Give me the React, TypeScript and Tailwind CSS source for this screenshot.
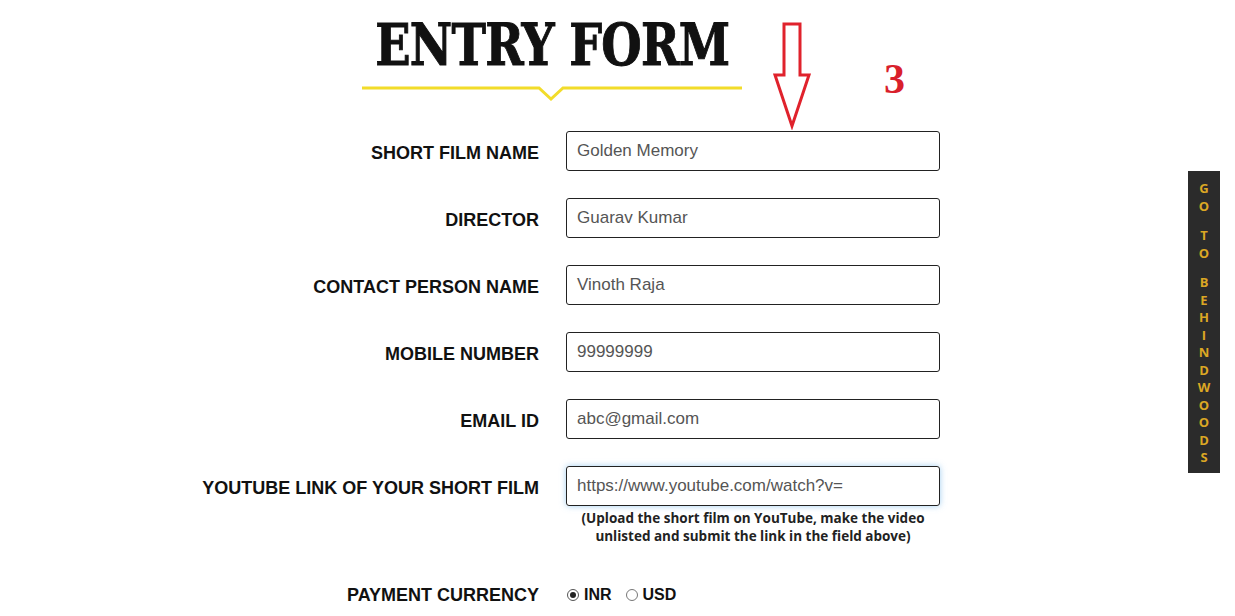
import React from "react";

const rows = [
  { label: "SHORT FILM NAME", value: "Golden Memory" },
  { label: "DIRECTOR", value: "Guarav Kumar" },
  { label: "CONTACT PERSON NAME", value: "Vinoth Raja" },
  { label: "MOBILE NUMBER", value: "99999999" },
  { label: "EMAIL ID", value: "abc@gmail.com" },
];

const tabLetters = ["G", "O", " ", "T", "O", " ", "B", "E", "H", "I", "N", "D", "W", "O", "O", "D", "S"];

export default function App() {
  return (
    <div className="relative w-[1235px] h-[616px] overflow-hidden bg-white" style={{ fontFamily: '"Liberation Sans", Arial, sans-serif' }}>
      {/* Header */}
      <div className="ml-[362px] w-[380px] pt-[15px] flex flex-col items-center">
        <h1
          className="text-[58px] leading-[60px] font-bold text-[#111] tracking-[-1px] whitespace-nowrap scale-x-[0.8] [-webkit-text-stroke:1px_#111]"
          style={{ fontFamily: '"DejaVu Serif", serif' }}
        >
          ENTRY FORM
        </h1>
        <svg width="380" height="16" viewBox="0 0 380 16" className="mt-[10px] block">
          <polyline points="0,3 177,3 189,14 201,3 380,3" fill="none" stroke="#f2dc2a" strokeWidth="3" />
        </svg>
      </div>

      {/* Form */}
      <div className="ml-[190px] mt-[30px] grid grid-cols-[349px_374px] gap-x-[27px]">
        {rows.map((r) => (
          <React.Fragment key={r.label}>
            <div className="h-[40px] pt-[4px] flex items-center justify-end text-[18px] font-bold text-[#111]">{r.label}</div>
            <div className="h-[40px] mb-[27px] border border-[#222] rounded-[3px] flex items-center pl-[10px] text-[17px] text-[#555]">
              {r.value}
            </div>
          </React.Fragment>
        ))}
        <div className="h-[40px] pt-[4px] flex items-center justify-end text-[18px] font-bold text-[#111]">YOUTUBE LINK OF YOUR SHORT FILM</div>
        <div>
          <div className="h-[40px] border border-[#222] rounded-[3px] flex items-center pl-[10px] text-[17px] text-[#555] shadow-[0_0_6px_rgba(102,175,233,0.6)]">
            https://www.youtube.com/watch?v=
          </div>
          <p
            className="mt-[3px] text-center text-[13.5px] leading-[18px] font-bold text-[#222]"
            style={{ fontFamily: '"Open Sans", sans-serif' }}
          >
            (Upload the short film on YouTube, make the video
            <br />
            unlisted and submit the link in the field above)
          </p>
        </div>
        <div className="mt-[40px] h-[20px] flex items-center justify-end text-[18px] font-bold text-[#111]">PAYMENT CURRENCY</div>
        <div className="mt-[40px] h-[20px] flex items-center text-[16px] font-bold text-[#111]">
          <span className="ml-[1px] w-[12px] h-[12px] rounded-full border border-[#555] flex items-center justify-center">
            <span className="w-[6px] h-[6px] rounded-full bg-[#222]" />
          </span>
          <span className="ml-[5px]">INR</span>
          <span className="ml-[14px] w-[12px] h-[12px] rounded-full border border-[#777]" />
          <span className="ml-[5px]">USD</span>
        </div>
      </div>

      {/* Annotation arrow */}
      <svg className="absolute left-[772px] top-[22px]" width="40" height="108" viewBox="0 0 40 108">
        <polygon points="12,2 28,2 28,53 37,53 20,104 3,53 12,53" fill="none" stroke="#e0222c" strokeWidth="3" strokeLinejoin="miter" />
      </svg>
      <div
        className="absolute left-[884px] top-[54px] text-[42px] leading-[50px] font-bold text-[#d9202b]"
        style={{ fontFamily: '"Liberation Serif", "Times New Roman", serif' }}
      >
        3
      </div>

      {/* Side tab */}
      <div
        className="absolute left-[1188px] top-[171px] w-[32px] h-[302px] bg-[#2b2b2b] flex flex-col items-center pt-[9px]"
        style={{ fontFamily: '"Open Sans", sans-serif' }}
      >
        {tabLetters.map((l, i) =>
          l === " " ? (
            <div key={i} className="h-[12px]" />
          ) : (
            <div key={i} className="h-[17.5px] leading-[17.5px] text-[13px] font-bold text-[#dba724]">
              {l}
            </div>
          )
        )}
      </div>
    </div>
  );
}
